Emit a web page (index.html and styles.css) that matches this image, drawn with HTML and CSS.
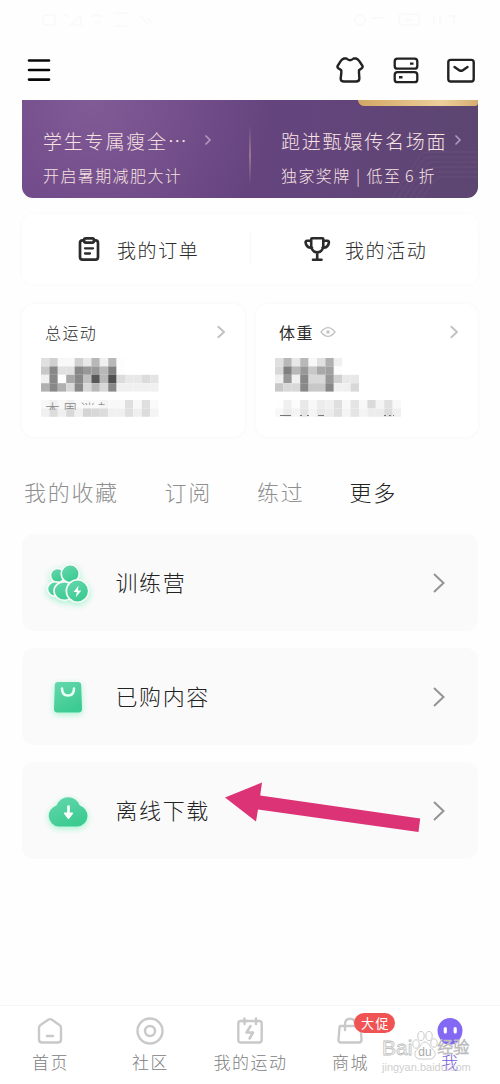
FILE: index.html
```html
<!DOCTYPE html>
<html lang="zh-CN">
<head>
<meta charset="utf-8">
<title>我</title>
<link rel="stylesheet" href="styles.css">
</head>
<body>
<div class="app">
  <div class="status">
    <svg width="500" height="40" viewBox="0 0 500 40" fill="none" stroke="#fafafa" stroke-width="2">
      <rect x="43" y="15" width="12" height="10" rx="3"/><path d="M63 14l5 3M71 25l10-9v9zM92 17q5-4 11 0M95 22h6M114 13h14M115 26h12M140 16l8 8M148 18l3 5"/>
      <circle cx="360" cy="20" r="5"/><rect x="399" y="14" width="20" height="11" rx="3"/><path d="M372 18h12M405 20h8M434 16v8M440 16v8M446 16h8v8"/>
    </svg>
  </div>
  <header class="topbar">
    <svg class="menu" width="24" height="24" viewBox="0 0 24 24" stroke="#080808" stroke-width="2.6" stroke-linecap="round"><path d="M2 2.5h20M2 12h20M2 21.6h20"/></svg>
    <div class="actions">
      <svg width="28" height="28" viewBox="0 0 28 28" fill="none" stroke="#222" stroke-width="2.4" stroke-linejoin="round" stroke-linecap="round"><path d="M8 2.5 10.5 2.5Q14 5.800 17.500 2.500L20 2.500Q22 3 23.500 5.400L26.500 10Q27 11.300 25.700 12.300L23 14.200V17L23.400 22.500Q23.400 25.500 20 25.500H8Q4.600 25.500 4.700 22.500L5.300 17V14.200L2.300 12.300Q1 11.300 1.600 10L4.500 5.400Q6 3 8 2.500Z"/></svg>
      <svg width="28" height="28" viewBox="0 0 28 28" fill="none" stroke="#222" stroke-width="2.300"><rect x="2.700" y="2.700" width="22.600" height="10" rx="2.800"/><rect x="2.700" y="16.200" width="22.600" height="10" rx="2.800"/><path d="M18 7.600h3.500M7 21.300h3.500" stroke-width="2.400"/></svg>
      <svg width="28" height="28" viewBox="0 0 28 28" fill="none" stroke="#222" stroke-width="2.400" stroke-linecap="round" stroke-linejoin="round"><rect x="1.300" y="3.900" width="25.400" height="21.600" rx="2.400"/><path d="M7.500 11 12.500 14.400Q14 15.200 15.500 14.400L20.500 11"/></svg>
    </div>
  </header>
  <main class="content">
    <section class="banner">
      <svg class="lines" width="88" height="48" viewBox="0 0 88 48" fill="none" stroke="#7d648e" stroke-opacity=".3"><path d="M2 48 29 7Q32 2 38 2H88M8 48 32 11Q35 7 40 7H88M14 48 35 16Q38 12 43 12H88M20 48 38 21Q41 17 46 17H88M26 48 41 26Q44 22 49 22H88M32 48 44 31Q47 27 52 27H88"/></svg>
      <div class="gold"></div>
      <div class="promo">
        <div class="promo-title"><span>学生专属瘦全⋯</span><svg width="8" height="12" viewBox="0 0 8 12"><path d="M1.500 1.500 6 6 1.500 10.500"/></svg></div>
        <div class="promo-sub">开启暑期减肥大计</div>
      </div>
      <div class="promo second">
        <div class="promo-title"><span>跑进甄嬛传名场面</span><svg width="8" height="12" viewBox="0 0 8 12"><path d="M1.500 1.500 6 6 1.500 10.500"/></svg></div>
        <div class="promo-sub">独家奖牌<i>|</i>低至<i class="six">6</i>折</div>
      </div>
    </section>
    <section class="shortcuts">
      <div class="shortcut">
        <svg width="28" height="26" viewBox="0 0 28 26" fill="none" stroke="#2b2b2b" stroke-width="2.700" stroke-linecap="round" stroke-linejoin="round"><path d="M9 4.300H7.500Q5 4.300 5 7V21Q5 23.700 7.500 23.700H20.500Q23 23.700 23 21V7Q23 4.300 20.500 4.300H19"/><rect x="9" y="2.300" width="10" height="4.300" rx="1.800"/><path d="M10 12.300h8M10 17.500h5" stroke-width="2.300"/></svg>
        <span>我的订单</span>
      </div>
      <div class="shortcut">
        <svg width="28" height="26" viewBox="0 0 28 26" fill="none" stroke="#2b2b2b" stroke-width="2.600" stroke-linecap="round" stroke-linejoin="round"><path d="M9 2.300H19.500Q20.300 2.300 20.300 3.300V10Q20 14 17 15.800 14.200 17 11.500 15.800 8.500 14 8.200 10V3.300Q8.200 2.300 9 2.300ZM8 4.800H4Q2.500 4.800 2.600 6.500 3.100 11 7.500 11.800H9M20.500 4.800H24.500Q26 4.800 25.900 6.500 25.400 11 21 11.800H19.500M14.200 17V23.500M10 23.700H18.500"/></svg>
        <span>我的活动</span>
      </div>
    </section>
    <section class="stats">
      <div class="stat">
        <div class="stat-head"><span>总运动</span><svg class="more" width="10" height="14" viewBox="0 0 10 14"><path d="M1.800 1.200 8 7 1.800 12.800"/></svg></div>
        <svg class="mosaic" width="126" height="34" data-rows="E0 D0 F8 F8 D0 E8 B8 F0 B8 FD/C8 88 E0 E0 88 98 98 B8 80 FD/F0 88 FF A8 88 C0 58 B8 50 DC E8 E8 DC E4/B0 88 B0 D8 88 D8 B8 D8 88 F0 F0 F0 F0 F0"></svg>
        <div class="masked">
          <svg class="mosaic" width="126" height="17" data-rows="F8 F0 F8 F0 FA F8 FA F4 F8 F8 DF F8 DF FA/F0 DC F0 D8 F0 D4 D8 DC F0 F0 DF F0 DC F4"></svg>
          <span class="peek">本周消耗</span>
        </div>
      </div>
      <div class="stat">
        <div class="stat-head"><span class="strong">体重</span><svg class="eye" width="16" height="12" viewBox="0 0 16 12"><path d="M1 6Q8-2.800 15 6 8 14.800 1 6Z"/><circle cx="8" cy="6" r="1.800"/></svg><svg class="more" width="10" height="14" viewBox="0 0 10 14"><path d="M1.800 1.200 8 7 1.800 12.800"/></svg></div>
        <svg class="mosaic" width="126" height="34" data-rows="E0 B8 E8 B8 F8 E0 B0 F0/D8 80 B8 98 C8 A8 A0 FC/F0 98 F0 88 D8 D8 98 D0 E8 E8/C8 D8 D8 88 C8 C8 88 F0 F0 D8"></svg>
        <div class="masked">
          <svg class="mosaic" width="126" height="17" data-rows="FE F0 FC E8 F8 EC F0 DF F8 E4 F8 DA F4 E0 F8/F8 EC F4 E4 F4 E8 EC DF F4 E4 F4 EC EC DC F0"></svg>
          <svg class="marks" width="126" height="17" viewBox="0 0 126 17" stroke="#777"><path d="M5 15.500h11M25 15.500h2M32 15.500h2M43 15.500h6M109 15.500h2M114 15.500h2M118 15.500h1"/></svg>
        </div>
      </div>
    </section>
    <nav class="tabs"><span>我的收藏</span><span>订阅</span><span>练过</span><span class="on">更多</span></nav>
    <section class="list">
      <div class="item">
        <svg class="glyph" width="56" height="56" viewBox="0 0 56 56">
          <defs><linearGradient id="g" x1="0" y1="0" x2=".5" y2="1"><stop offset="0" stop-color="#67d7ae"/><stop offset="1" stop-color="#3ccb91"/></linearGradient></defs>
          <g fill="url(#g)" stroke="#fafafa" stroke-width="1.600"><circle cx="17.500" cy="20.500" r="7"/><ellipse cx="15" cy="34" rx="7.500" ry="7.300"/><ellipse cx="24.500" cy="36" rx="10.500" ry="9.400"/><circle cx="30.200" cy="18.800" r="9"/><circle cx="37.500" cy="36" r="11.200"/></g>
          <path d="M38.700 30.500 33.500 37h3.400L35.800 42.300 41.300 35.500h-3.500z" fill="#fff"/>
        </svg>
        <span>训练营</span>
        <svg class="go" width="14" height="22" viewBox="0 0 14 22"><path d="M2 2 11.500 11 2 20"/></svg>
      </div>
      <div class="item">
        <svg class="glyph" width="56" height="56" viewBox="0 0 56 56"><path d="M18 13H38Q41 13 41.200 16L42 40Q42 43.500 38.500 43.500H17.500Q14 43.500 14 40L14.800 16Q15 13 18 13Z" fill="url(#g)"/><path d="M22 19.500Q22 26.500 28 26.500T34 19.500" fill="none" stroke="#eafff5" stroke-width="2.500" stroke-linecap="round"/></svg>
        <span>已购内容</span>
        <svg class="go" width="14" height="22" viewBox="0 0 14 22"><path d="M2 2 11.500 11 2 20"/></svg>
      </div>
      <div class="item">
        <svg class="glyph" width="56" height="56" viewBox="0 0 56 56"><path d="M16.500 22.500A12.300 12.300 0 0 1 39.800 22.500 10.800 10.800 0 0 1 37.500 43.600H18.500A10.800 10.800 0 0 1 16.500 22.500Z" fill="url(#g)"/><path d="M28.500 23.500V31" stroke="#fff" stroke-width="2.600" stroke-linecap="round"/><path d="M24.100 30H32.900L28.500 36Z" fill="#fff" stroke="#fff" stroke-width="1" stroke-linejoin="round"/></svg>
        <span>离线下载</span>
        <svg class="go" width="14" height="22" viewBox="0 0 14 22"><path d="M2 2 11.500 11 2 20"/></svg>
        <svg class="pointer" width="196" height="52" viewBox="0 0 196 52"><path d="M0 16.500 37 1.500 35.200 14.500 195.200 37.500 193.500 51 33 28.500 31 40.500Z" fill="#dc3377"/></svg>
      </div>
    </section>
  </main>
  <footer class="nav">
    <div class="tab"><svg width="28" height="28" viewBox="0 0 28 28"><path d="M12.500 2.600Q14 1.600 15.500 2.600L23.500 8Q25 9 25 11V22.500Q25 25.500 22 25.500H6Q3 25.500 3 22.500V11Q3 9 4.500 8ZM11 19H17"/></svg><span>首页</span></div>
    <div class="tab"><svg width="28" height="28" viewBox="0 0 28 28"><circle cx="14" cy="14" r="12.500"/><circle cx="14" cy="14" r="5"/></svg><span>社区</span></div>
    <div class="tab"><svg width="28" height="28" viewBox="0 0 28 28"><rect x="2.300" y="4" width="23.400" height="21.500" rx="2.500"/><path d="M8.500 1.500V7M5.800 4H11.200M20 1.500V7"/><path d="M14.500 9 10.500 15.500H17L13.500 21.500" stroke-width="2.500"/></svg><span>我的运动</span></div>
    <div class="tab"><svg width="28" height="28" viewBox="0 0 28 28"><path d="M4.500 9H23Q24.500 9 24.700 11L25.500 22.500Q25.500 25.500 23 25.500H5Q2.300 25.500 2.500 22.500L3.500 11Q3.500 9 4.500 9ZM9 13V7Q9 1.800 14 1.800 19 1.800 19 7"/></svg><b class="badge">大促</b><span>商城</span></div>
    <div class="tab active"><svg width="28" height="28" viewBox="0 0 28 28"><path class="face" d="M14 1A12.500 12.500 0 0 1 26.500 13.500Q26.500 20 21 25.500Q19 27.500 14 27.500T7 25.500Q1.500 20 1.500 13.500A12.500 12.500 0 0 1 14 1Z"/><path class="eyes" d="M9.300 11.500V15M19.200 11.500V15"/></svg><span>我</span></div>
    <div class="watermark">
      <div class="mark"><span>Bai</span><svg width="26" height="30" viewBox="0 0 26 30"><g fill="#fff" fill-opacity=".85" stroke="#ccc"><ellipse cx="4" cy="14" rx="3.200" ry="4.200"/><ellipse cx="9" cy="6" rx="3.200" ry="4.500"/><ellipse cx="17" cy="6" rx="3.200" ry="4.500"/><ellipse cx="22" cy="13" rx="3.200" ry="4.200"/><path d="M13 12C17 12 17 17 21 19.500 25 23 23 29 18 29H8C3 29 1 23 5 19.500 9 17 9 12 13 12Z"/></g><text x="13" y="26" text-anchor="middle">du</text></svg><span class="cn">经验</span></div>
      <div class="url">jingyan.baidu.com</div>
    </div>
  </footer>
</div>
<script src="mosaic.js"></script>
</body>
</html>
```

FILE: styles.css
```css
* { box-sizing: border-box; }
body { margin: 0; background: #fefefe; font-family: "Noto Sans CJK SC", sans-serif; font-weight: 300; color: #2b2b2b; }
svg { display: block; flex: none; }
.app { width: 500px; height: 1084px; display: flex; flex-direction: column; overflow: hidden; }
.status { height: 40px; }
.topbar { height: 60px; display: flex; align-items: center; justify-content: space-between; padding: 0 25px 0 27px; }
.actions { display: flex; gap: 27.500px; }
.content { flex: 1; padding: 0 22px; }

.banner { position: relative; display: flex; height: 98px; border-radius: 0 0 11px 11px; overflow: hidden; background: radial-gradient(circle at 70px 0, #815b96 0, transparent 180px), linear-gradient(95deg, #694384 0%, #64447d 60%, #5c4670 100%); }
.gold { position: absolute; top: 0; right: 0; width: 120px; height: 6px; background: linear-gradient(90deg, #d3a765, #ebcf9a 70%, #d6ae70); border-radius: 0 0 7px 14px; }
.lines { position: absolute; right: 0; bottom: 0; }
.promo { width: 228px; padding: 27px 0 0 21px; color: #f8e2e2; }
.promo.second { position: relative; padding-left: 31px; }
.promo.second::before { content: ""; position: absolute; left: -1px; top: 25px; width: 2px; height: 60px; background: linear-gradient(transparent, #9b7690, transparent); }
.promo-title { display: flex; align-items: center; gap: 15px; height: 27px; font-size: 19px; letter-spacing: 1.800px; white-space: nowrap; }
.promo.second .promo-title { gap: 7px; }
.promo-title path { fill: none; stroke: #b59bc2; stroke-width: 1.500; }
.promo-title svg { position: relative; top: -1px; }
.promo-sub { height: 24px; margin-top: 9px; font-size: 16px; line-height: 24px; letter-spacing: 1.400px; white-space: nowrap; }
.promo-sub i { display: inline-block; width: 16px; text-align: center; font-style: normal; }
.promo-sub .six { width: 17px; }

.shortcuts { display: flex; height: 70px; margin-top: 16px; border-radius: 11px; background: #fff; box-shadow: 0 0 4px #f8f8f8; }
.shortcut { width: 228px; display: flex; align-items: center; padding-left: 53px; gap: 14px; font-size: 19px; letter-spacing: 1.600px; }
.shortcut + .shortcut { background: linear-gradient(#f8f8f8, #f8f8f8) 0 50% / 1px 34px no-repeat; }

.stats { display: grid; grid-template-columns: 223px 222px; gap: 11px; height: 133px; margin-top: 20px; }
.stat { padding: 14px 20px 0 19px; border-radius: 12px; background: #fff; box-shadow: 0 0 4px #f6f6f6; }
.stat-head { height: 28px; display: flex; align-items: center; padding-left: 4px; font-size: 16px; letter-spacing: 1.400px; }
.stat-head .strong { font-weight: 400; }
.more { margin-left: auto; margin-right: -1px; }
.more path { fill: none; stroke: #c1c1c1; stroke-width: 1.900; }
.eye { margin-left: 6px; }
.eye path { fill: none; stroke: #c4c4c4; stroke-width: 1.300; }
.eye circle { fill: #c4c4c4; }
.stat > .mosaic { margin-top: 12px; }
.masked { position: relative; height: 17px; margin-top: 8px; }
.peek { position: absolute; left: 4px; top: 0; line-height: 17px; font-size: 15px; letter-spacing: 2.500px; color: #888; clip-path: polygon(0 0, 60px 0, 60px 5px, 32px 5px, 32px 10px, 0 10px); }
.marks { position: absolute; left: 0; top: 0; }

.tabs { display: flex; align-items: center; height: 97px; padding: 10px 0 0 2px; font-size: 22px; letter-spacing: 1.700px; color: #8f8f8f; }
.tabs span { width: 92.500px; padding-left: 1px; }
.tabs span:first-child { width: 139.500px; padding: 0; }
.tabs .on { color: #222; }

.list { display: grid; grid-template-rows: repeat(3, 97px); gap: 17px; }
.item { position: relative; display: flex; align-items: center; padding: 0 32px 0 18px; border-radius: 12px; background: #fafafa; font-size: 22px; letter-spacing: 1.600px; color: #222; }
.item span { margin: -3px 0 0 19.500px; }
.glyph { filter: drop-shadow(0 2px 3px #a5f2d0); }
.go { margin-left: auto; }
.go path { fill: none; stroke: #949494; stroke-width: 2; }
.pointer { position: absolute; left: 203px; top: 19px; }

.nav { position: relative; display: grid; grid-template-columns: repeat(5, 1fr); height: 79px; border-top: 1.500px solid #f5f5f5; background: #fff; }
.tab { position: relative; display: flex; flex-direction: column; align-items: center; padding-top: 11px; font-size: 17px; letter-spacing: 1.500px; color: #808080; }
.tab > svg { fill: none; stroke: #c9c9c9; stroke-width: 2.400; stroke-linecap: round; stroke-linejoin: round; }
.tab > span { height: 24px; line-height: 24px; margin-top: 5px; padding-left: 1px; }
.tab.active { color: #6f58dc; }
.tab .face { fill: #8368f4; stroke: none; }
.tab .eyes { stroke: #fff; stroke-width: 3.200; }
.badge { position: absolute; left: 54px; top: 7px; width: 41px; height: 20px; border-radius: 10px; background: #f05353; color: #fff; font-size: 13px; font-weight: 400; line-height: 20px; text-align: center; letter-spacing: 1.500px; padding-left: 2px; }
.watermark { position: absolute; left: 382px; top: 24px; width: 92px; color: #fff; font-family: "Liberation Sans", "Noto Sans CJK SC", sans-serif; }
.mark { display: flex; align-items: flex-end; height: 30px; font-size: 21px; line-height: 25px; -webkit-text-stroke: 0.800px #bdbdbd; }
.mark .cn { font-size: 16px; }
.mark text { fill: #aaa; font-size: 12px; stroke: none; -webkit-text-stroke: 0; }
.mark svg { margin: 0 -1px 0 0; }
.url { font-size: 11px; line-height: 14px; color: #cfcfcf; white-space: nowrap; }
```

FILE: mosaic.js
```js
// Paints the blurred-out figures as grey tiles.
document.querySelectorAll(".mosaic").forEach(function (svg) {
  var size = 8.4;
  svg.dataset.rows.split("/").forEach(function (row, y) {
    row.split(" ").forEach(function (shade, x) {
      var tile = document.createElementNS("http://www.w3.org/2000/svg", "rect");
      tile.setAttribute("x", x * size);
      tile.setAttribute("y", y * size);
      tile.setAttribute("width", size);
      tile.setAttribute("height", size);
      tile.setAttribute("fill", "#" + shade + shade + shade);
      svg.appendChild(tile);
    });
  });
});
```
